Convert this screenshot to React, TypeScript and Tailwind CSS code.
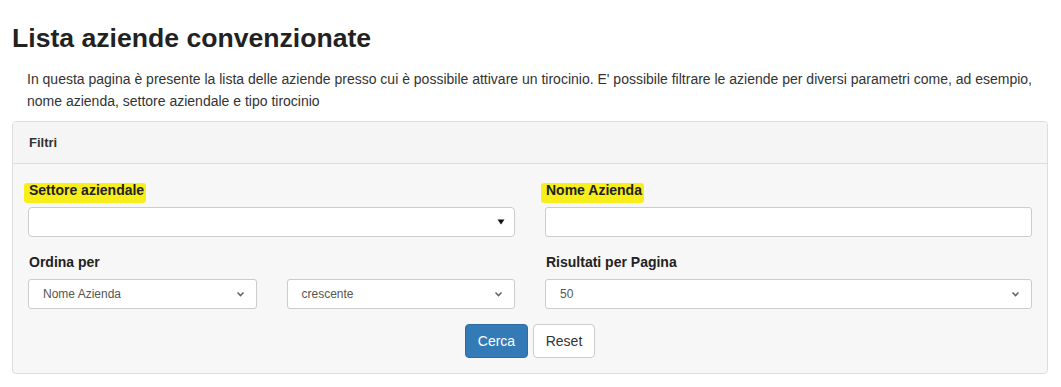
import React from "react";

const font = { fontFamily: '"Liberation Sans", Arial, sans-serif' };

function Chevron() {
  return (
    <svg width="9" height="6" viewBox="0 0 9 6" className="shrink-0">
      <path d="M1.5 1.5 L4.5 4.5 L7.5 1.5" fill="none" stroke="#666" strokeWidth="1.6" />
    </svg>
  );
}

function FakeSelect({ value }: { value: string }) {
  return (
    <div className="flex h-[30px] items-center justify-between rounded-[3px] border border-[#ccc] bg-white pl-[14px] pr-[11px] text-[12px] text-[#555]">
      <span>{value}</span>
      <Chevron />
    </div>
  );
}

function Marker({ children }: { children: React.ReactNode }) {
  return (
    <span className="relative inline-block">
      <span className="absolute -left-[5px] -right-[2px] top-[3px] bottom-[-3px] rounded-[3px] bg-[#f7ee1b]" />
      <span className="relative">{children}</span>
    </span>
  );
}

export default function App() {
  return (
    <div className="min-h-[387px] w-[1061px] bg-white text-[14px] text-[#333]" style={font}>
      <div className="px-[12px] pt-[22px]">
        <h2 className="text-[26.6px] font-bold leading-[32px] text-[#222]">Lista aziende convenzionate</h2>
        <p className="mt-[14px] pl-[15px] pr-[13px] leading-[22px]">
          In questa pagina è presente la lista delle aziende presso cui è possibile attivare un tirocinio. E' possibile filtrare le aziende per diversi parametri come, ad esempio, nome azienda, settore aziendale e tipo tirocinio
        </p>

        <div className="mt-[9px] w-[1036px] overflow-hidden rounded-[4px] border border-[#ddd] bg-[#f7f7f7]">
          <div className="flex h-[42px] items-center border-b border-[#ddd] bg-[#f5f5f5] px-[16px] text-[13px] font-bold">
            Filtri
          </div>
          <div className="px-[15px] pb-[15px] pt-[16px]">
            <div className="grid grid-cols-2 gap-x-[30px]">
              <div>
                <div className="mb-[7px] h-[20px] pl-[1px] text-[14px] font-bold leading-[20px] text-[#222]">
                  <Marker>Settore aziendale</Marker>
                </div>
                <div className="flex h-[30px] items-center justify-end rounded-[4px] border border-[#ccc] bg-white pr-[9px]">
                  <svg width="8" height="6" viewBox="0 0 8 6">
                    <path d="M0.5 0.5 H7.5 L4 5.5 Z" fill="#111" />
                  </svg>
                </div>
              </div>
              <div>
                <div className="mb-[7px] h-[20px] pl-[1px] text-[14px] font-bold leading-[20px] text-[#222]">
                  <Marker>Nome Azienda</Marker>
                </div>
                <div className="h-[30px] rounded-[3px] border border-[#ccc] bg-white" />
              </div>
            </div>

            <div className="mt-[15px] grid grid-cols-2 gap-x-[30px]">
              <div>
                <div className="mb-[7px] h-[20px] pl-[1px] text-[14px] font-bold leading-[20px] text-[#222]">Ordina per</div>
                <div className="grid grid-cols-2 gap-x-[30px]">
                  <FakeSelect value="Nome Azienda" />
                  <FakeSelect value="crescente" />
                </div>
              </div>
              <div>
                <div className="mb-[7px] h-[20px] pl-[1px] text-[14px] font-bold leading-[20px] text-[#222]">Risultati per Pagina</div>
                <FakeSelect value="50" />
              </div>
            </div>

            <div className="mt-[15px] flex justify-center gap-[5px]">
              <button className="h-[34px] w-[63px] rounded-[4px] border border-[#2e6da4] bg-[#337ab7] text-[14px] text-white">
                Cerca
              </button>
              <button className="h-[34px] w-[62px] rounded-[4px] border border-[#ccc] bg-white text-[14px] text-[#333]">
                Reset
              </button>
            </div>
          </div>
        </div>
      </div>
    </div>
  );
}
